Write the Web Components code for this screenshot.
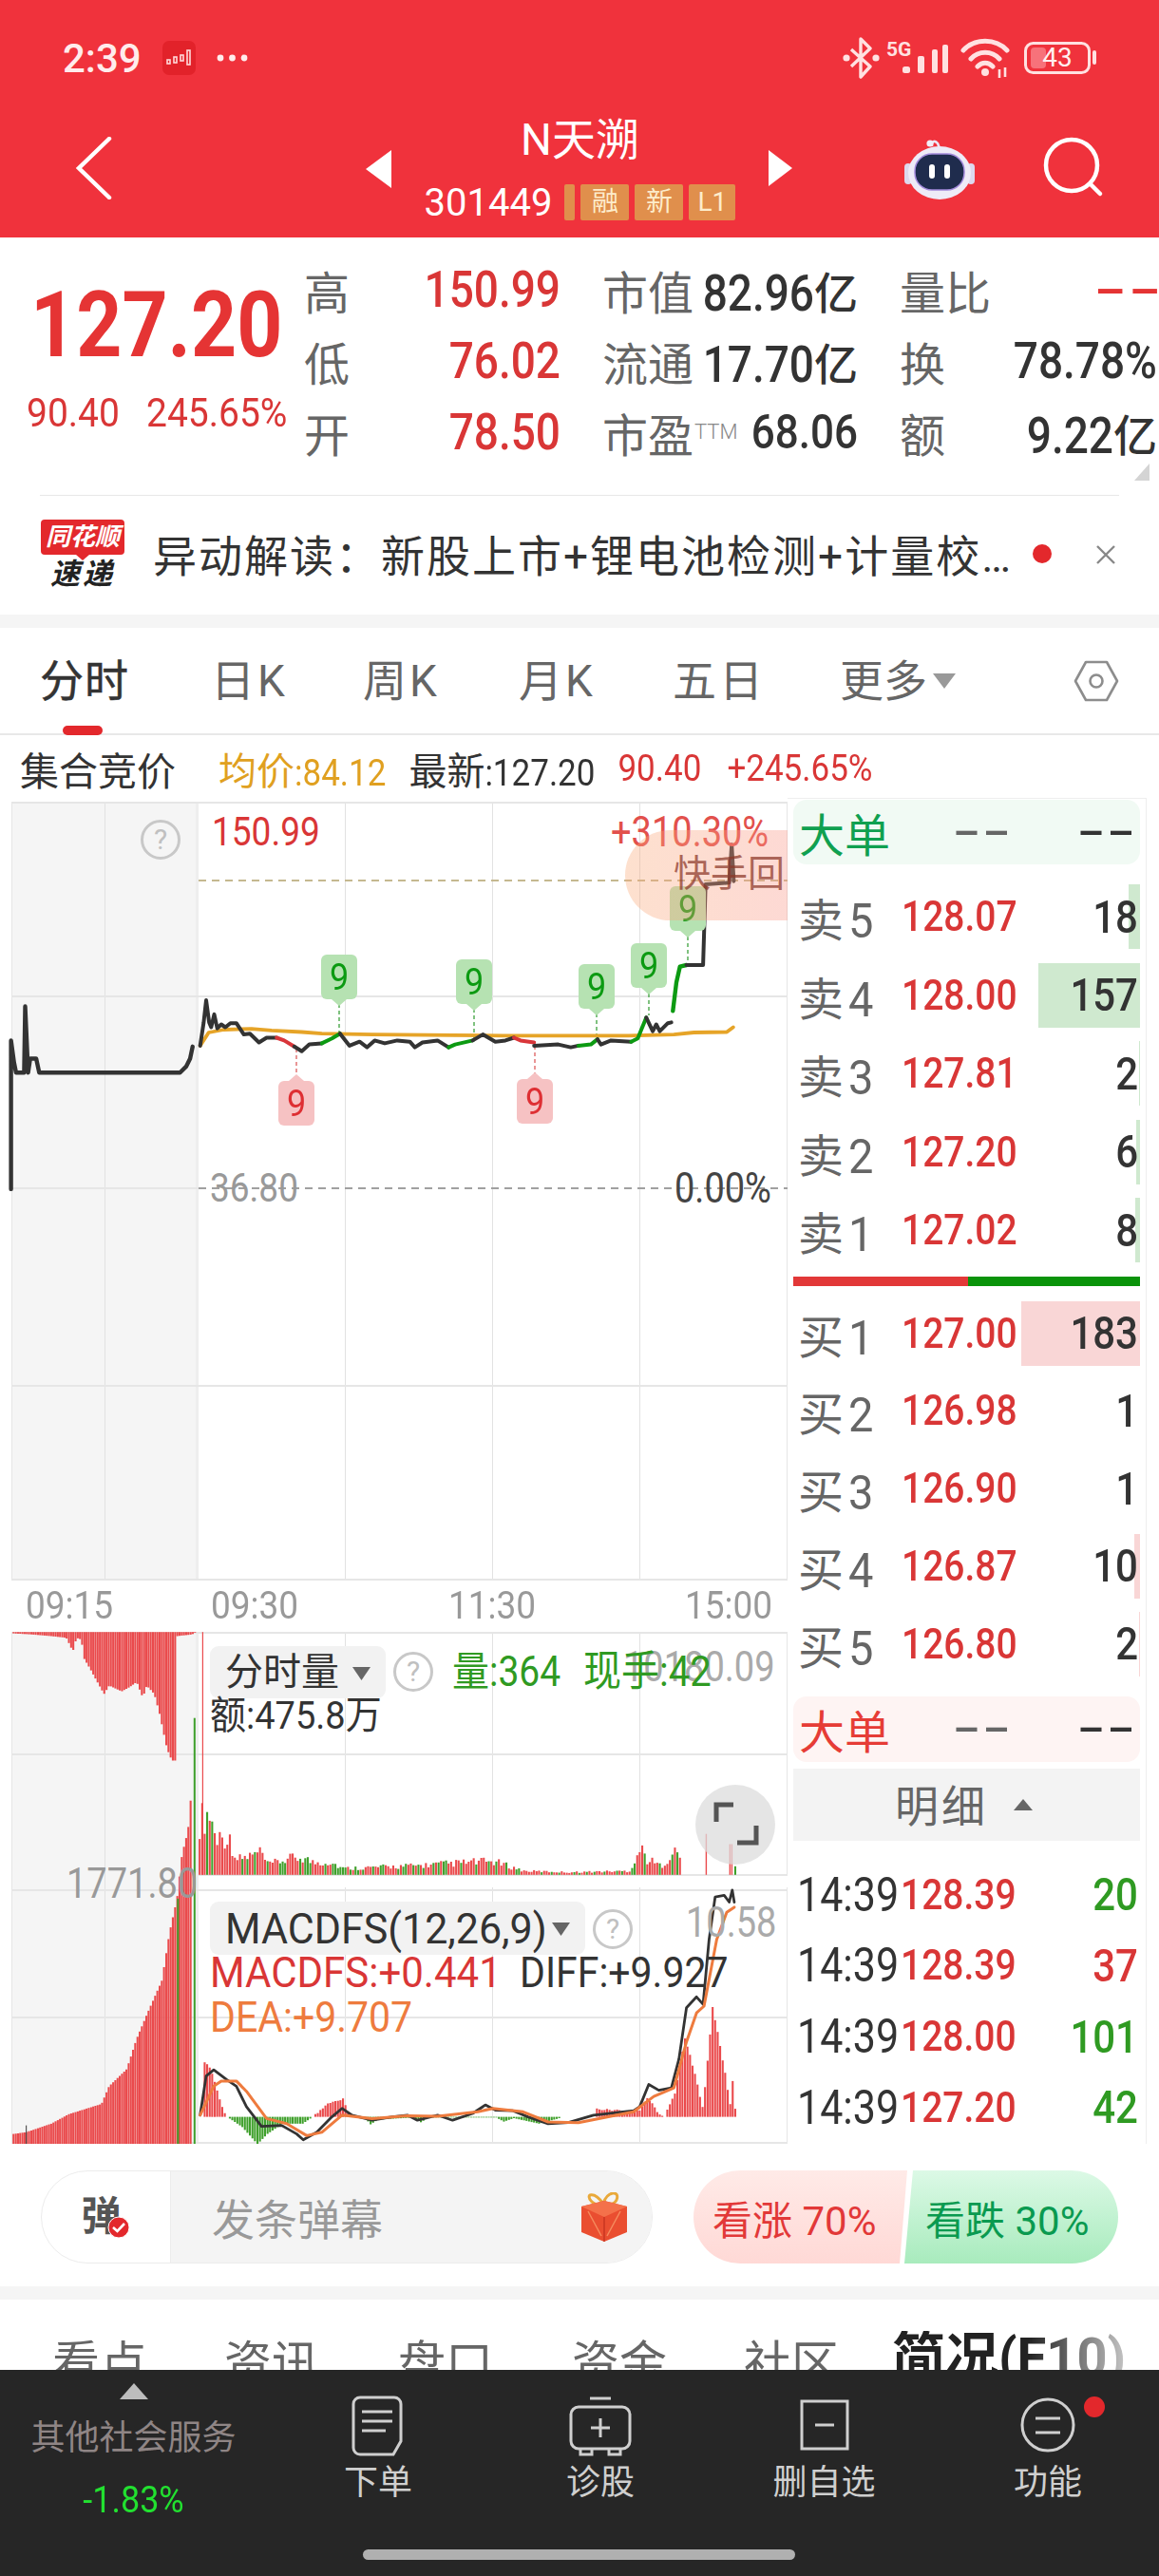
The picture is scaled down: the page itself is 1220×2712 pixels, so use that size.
<!DOCTYPE html>
<html lang="zh">
<head>
<meta charset="utf-8">
<title>N天溯</title>
<style>
html, body { margin: 0; padding: 0; background: #fff; }
body { width: 1220px; height: 2712px; overflow: hidden; font-family: Roboto, "Noto Sans CJK SC", sans-serif; color: #333; }
</style>
</head>
<body>
<app-header></app-header>
<quote-panel></quote-panel>
<news-bar></news-bar>
<gap-band></gap-band>
<chart-tabs></chart-tabs>
<info-line></info-line>
<main-row>
  <chart-column slot="left">
    <price-chart>
      <chart-label x="223" y="875" c="#d93636" size="37" sy="1.15">150.99</chart-label>
      <chart-label x="643" y="875" c="#e2504c" size="38" sy="1.15">+310.30%</chart-label>
      <chart-label x="169" y="883" c="#c0c0c0" size="30">?</chart-label>
      <chart-label x="221" y="1250" c="#999" size="37" sy="1.15">36.80</chart-label>
      <chart-label x="710" y="1250" c="#444" size="38" sy="1.15">0.00%</chart-label>
      <sig-mark x="357" y="1004" kind="up"></sig-mark>
      <sig-mark x="499" y="1009" kind="up"></sig-mark>
      <sig-mark x="628" y="1014" kind="up"></sig-mark>
      <sig-mark x="683" y="992" kind="up"></sig-mark>
      <sig-mark x="724" y="932" kind="up"></sig-mark>
      <sig-mark x="312" y="1137" kind="down"></sig-mark>
      <sig-mark x="563" y="1135" kind="down"></sig-mark>
      <hot-tag>快手回</hot-tag>
    </price-chart>
    <time-axis></time-axis>
    <volume-chart>
      <chart-label x="70" y="1982" c="#999" size="38" sy="1.15">1771.80</chart-label>
      <chart-label x="237" y="1760" c="#333" size="40">分时量</chart-label>
      <chart-label x="435" y="1759" c="#c0c0c0" size="30" center="1">?</chart-label>
      <chart-label x="656" y="1754" c="#aaa" size="38" sy="1.15">10180.09</chart-label>
      <chart-label x="476" y="1760" c="#2f9a22" size="39" sy="1.12">量:364</chart-label>
      <chart-label x="614" y="1760" c="#2f9a22" size="40" sy="1.1">现手:42</chart-label>
      <chart-label x="221" y="1805" c="#333" size="38" sy="1.08">额:475.8万</chart-label>
      <chart-label x="237" y="2030" c="#333" size="43" sy="1.05">MACDFS(12,26,9)</chart-label>
      <chart-label x="645" y="2030" c="#c0c0c0" size="30" center="1">?</chart-label>
      <chart-label x="722" y="2023" c="#aaa" size="38" sy="1.15">10.58</chart-label>
      <chart-label x="221" y="2076" c="#d93636" size="42" sy="1.05">MACDFS:+0.441</chart-label>
      <chart-label x="547" y="2076" c="#333" size="41" sy="1.08">DIFF:+9.927</chart-label>
      <chart-label x="221" y="2123" c="#ee7b3e" size="41" sy="1.08">DEA:+9.707</chart-label>
    </volume-chart>
  </chart-column>
  <order-book slot="right">
    <big-order kind="sell"></big-order>
    <book-row side="sell" idx="5" price="128.07" qty="18" bar="12"></book-row>
    <book-row side="sell" idx="4" price="128.00" qty="157" bar="107"></book-row>
    <book-row side="sell" idx="3" price="127.81" qty="2" bar="1"></book-row>
    <book-row side="sell" idx="2" price="127.20" qty="6" bar="4"></book-row>
    <book-row side="sell" idx="1" price="127.02" qty="8" bar="5"></book-row>
    <ratio-bar></ratio-bar>
    <book-row side="buy" idx="1" price="127.00" qty="183" bar="125"></book-row>
    <book-row side="buy" idx="2" price="126.98" qty="1" bar="0"></book-row>
    <book-row side="buy" idx="3" price="126.90" qty="1" bar="0"></book-row>
    <book-row side="buy" idx="4" price="126.87" qty="10" bar="6"></book-row>
    <book-row side="buy" idx="5" price="126.80" qty="2" bar="1"></book-row>
    <big-order kind="buy"></big-order>
    <detail-head></detail-head>
    <deal-row time="14:39" price="128.39" vol="20" c="#2f9a22"></deal-row>
    <deal-row time="14:39" price="128.39" vol="37" c="#d93636"></deal-row>
    <deal-row time="14:39" price="128.00" vol="101" c="#2f9a22"></deal-row>
    <deal-row time="14:39" price="127.20" vol="42" c="#2f9a22"></deal-row>
  </order-book>
</main-row>
<danmu-row></danmu-row>
<gap-band></gap-band>
<info-tabs></info-tabs>
<bottom-bar></bottom-bar>

<script>
const SHARED = `
  * { box-sizing: border-box; }
  :host { display: block; box-sizing: border-box; }
  .n { display: inline-block; transform: scaleY(1.15); }
  .dash { display: inline-block; font-weight: 700; transform: scaleX(2.1); transform-origin: right center; }
  svg { display: block; }
`;

class Base extends HTMLElement {
    constructor() {
        super();
        this.attachShadow({ mode: 'open' });
    }
    connectedCallback() {
        this.shadowRoot.innerHTML = `<style>${SHARED}${this.css()}</style>${this.html()}`;
        this.ready();
    }
    css() { return ''; }
    html() { return '<slot></slot>'; }
    ready() {}
}

// coordinates were read off the zoomed crops, these map them back to the page
const z3 = (u, v) => [u / 1.889, 560 + v / 3];
const z6 = (u, v) => [u / 1.889, 1700 + v / 2.786];
const z8 = (u, v) => [u / 1.889, 1050 + v / 2.364];

const line = (map, pts, color, w) => {
    const d = pts.map(p => map(p[0], p[1]).map(n => n.toFixed(1)).join(',')).join(' ');
    return `<polyline points="${d}" fill="none" stroke="${color}" stroke-width="${w}" stroke-linejoin="round" stroke-linecap="round"/>`;
};

const envelope = (pts, u) => {
    if (u <= pts[0][0]) return pts[0][1];
    for (let i = 1; i < pts.length; i++) {
        if (u <= pts[i][0]) {
            const [a, b] = [pts[i - 1], pts[i]];
            return a[1] + (b[1] - a[1]) * (u - a[0]) / (b[0] - a[0]);
        }
    }
    return pts[pts.length - 1][1];
};
const noise = i => Math.abs(Math.sin(i * 12.9898) * 43758.5453) % 1;

const gridLines = (ys, top, bottom) => `
    <rect x="12" y="${top}" width="194" height="${bottom - top}" fill="#f5f5f5"/>
    <rect x="206" y="${top}" width="3" height="${bottom - top}" fill="#eeeeee"/>
    ${[110, 363, 518, 673].map(x => `<rect x="${x}" y="${top}" width="1" height="${bottom - top}" fill="#e2e2e2"/>`).join('')}
    ${ys.map(y => `<rect x="12" y="${y}" width="817" height="2" fill="#e6e6e6"/>`).join('')}
    <rect x="12" y="${top}" width="1" height="${bottom - top}" fill="#e6e6e6"/>
    <rect x="828" y="${top}" width="1" height="${bottom - top}" fill="#e6e6e6"/>`;

class ChartLabel extends Base {
    css() { return `:host { position: absolute; line-height: 1; white-space: nowrap; }`; }
    ready() {
        const sy = this.getAttribute('sy') || 1;
        const cx = this.hasAttribute('center') || this.textContent === '?' ? '-50%' : '0';
        const top = this.parentElement.localName === 'volume-chart' ? 1717 : 839;
        this.style.left = this.getAttribute('x') + 'px';
        this.style.top = (this.getAttribute('y') - top) + 'px';
        this.style.color = this.getAttribute('c');
        this.style.fontSize = this.getAttribute('size') + 'px';
        this.style.transform = `translate(${cx}, -50%) scaleY(${sy})`;
    }
}

class SigMark extends Base {
    css() {
        return `
        :host { position: absolute; width: 38px; height: 47px; border-radius: 6px; display: flex; align-items: center; justify-content: center; font-size: 36px; line-height: 1; }
        :host([kind=up]) { background: #b6e2b2; color: #0c9a12; }
        :host([kind=down]) { background: #f6c2c3; color: #de2f33; }
        :host::after { content: ""; position: absolute; left: 11px; border: 8px solid transparent; }
        :host([kind=up])::after { top: 100%; border-top: 7px solid #b6e2b2; border-bottom: 0; }
        :host([kind=down])::after { bottom: 100%; border-bottom: 7px solid #f6c2c3; border-top: 0; }
        span { transform: scaleY(1.1); }`;
    }
    html() { return `<span>9</span>`; }
    ready() {
        this.style.left = (this.getAttribute('x') - 19) + 'px';
        this.style.top = (this.getAttribute('y') - 839) + 'px';
    }
}

class HotTag extends Base {
    css() {
        return `
        :host { position: absolute; left: 658px; top: 34px; width: 171px; height: 95px; padding: 22px 0 0 51px; border-radius: 48px 0 0 48px;
            background: linear-gradient(90deg, rgba(250,170,120,.36), rgba(250,150,135,.36)); color: rgba(140,55,40,.72); font-size: 39px; line-height: 48px; white-space: nowrap; overflow: hidden; }`;
    }
}

class AppHeader extends Base {
    css() {
        return `
        :host { height: 250px; background: #f0323c; color: #fff; display: grid; grid-template-rows: 122px 128px; }
        .status { display: flex; align-items: center; padding-left: 66px; color: #ffecec; position: relative; }
        .time { font-size: 42px; width: 105px; font-weight: 500; }
        .app { width: 35px; height: 36px; border-radius: 7px; background: #e2222a; display: flex; align-items: center; justify-content: center; }
        .more { margin-left: 22px; }
        .sys { position: absolute; left: 876px; top: 39px; width: 280px; height: 44px; color: #ffe1e1; }
        .five { position: absolute; left: 57px; top: 2px; font-size: 21px; font-weight: 700; line-height: 22px; }
        .batt { position: absolute; left: 210px; top: 6px; width: 54px; text-align: center; font-size: 28px; line-height: 32px; color: #fff0f0; }
        .nav { display: grid; grid-template-columns: 385px 449px 1fr; }
        .back { padding: 22px 0 0 78px; }
        .mid { display: flex; justify-content: space-between; align-items: flex-start; }
        .tri { margin-top: 36px; }
        .stack { display: flex; flex-direction: column; align-items: center; }
        .title { font-size: 46px; line-height: 50px; }
        .code { display: flex; align-items: center; margin-top: 22px; height: 38px; }
        .code b { font-weight: 400; font-size: 40px; margin-right: 13px; }
        .tag { height: 38px; background: #e08f4c; color: #fdeccb; font-size: 28px; line-height: 38px; text-align: center; border-radius: 2px; width: 51px; margin-left: 6px; }
        .tag.stripe { width: 11px; margin-left: 0; }
        .tag.l1 { width: 49px; }
        .tools { display: flex; align-items: flex-start; padding: 22px 0 0 118px; gap: 72px; }`;
    }
    html() {
        return `
        <div class="status">
            <span class="time">2:39</span>
            <span class="app"><svg width="28" height="18" viewBox="0 0 28 18" fill="none" stroke="#ffd9d9" stroke-width="1.6"><rect x="1" y="11" width="3" height="4"/><rect x="8" y="8" width="3" height="6"/><rect x="15" y="6" width="3" height="6"/><rect x="22" y="1" width="3" height="15"/></svg></span>
            <svg class="more" width="33" height="8" viewBox="0 0 33 8" fill="#ffecec"><circle cx="4" cy="4" r="3.4"/><circle cx="16.5" cy="4" r="3.4"/><circle cx="29" cy="4" r="3.4"/></svg>
            <div class="sys">
                <svg width="280" height="44" viewBox="0 0 280 44" fill="none" stroke="#ffe1e1">
                    <path d="M20 13 L40 31 L30 42 V2 L40 12 L20 31" stroke-width="3.4" stroke-linejoin="round"/>
                    <circle cx="15" cy="22" r="3.6" fill="#ffe1e1" stroke="none"/><circle cx="46" cy="22" r="3.6" fill="#ffe1e1" stroke="none"/>
                    <g fill="#ffe1e1" stroke="none">
                        <rect x="74" y="31" width="8" height="7" rx="2.5"/><rect x="90" y="20" width="7" height="18" rx="2"/><rect x="105" y="13" width="6" height="25" rx="2"/><rect x="116" y="8" width="6" height="30" rx="2"/>
                    </g>
                    <path d="M138 14 C150 1 172 1 184 14 M146 23 C154 14 168 14 176 23 M153 31 C158 26 164 26 169 31" stroke-width="5" stroke-linecap="round"/>
                    <circle cx="161" cy="37" r="4" fill="#ffe1e1" stroke="none"/>
                    <path d="M176 34 V43 M182 32 V42" stroke-width="2.6"/>
                    <rect x="203.500" y="6.500" width="67" height="31" rx="8" stroke-width="3"/>
                    <rect x="209" y="11" width="16" height="22" rx="4" fill="#f7727a" stroke="none"/>
                    <rect x="274" y="14" width="4" height="15" rx="2" fill="#ffe1e1" stroke="none"/>
                </svg>
                <span class="five">5G</span>
                <span class="batt">43</span>
            </div>
        </div>
        <div class="nav">
            <div class="back"><svg width="44" height="66" viewBox="0 0 44 66" fill="none" stroke="#fff" stroke-width="4.5" stroke-linecap="round"><path d="M37 2 L5 33 L37 64"/></svg></div>
            <div class="mid">
                <svg class="tri" width="27" height="40" viewBox="0 0 27 40" fill="#fff"><path d="M27 0 V40 L0 20Z"/></svg>
                <div class="stack">
                    <div class="title">N天溯</div>
                    <div class="code"><b>301449</b><span class="tag stripe"></span><span class="tag">融</span><span class="tag">新</span><span class="tag l1">L1</span></div>
                </div>
                <svg class="tri" width="25" height="38" viewBox="0 0 25 38" fill="#fff"><path d="M0 0 V38 L25 19Z"/></svg>
            </div>
            <div class="tools">
                <svg width="74" height="66" viewBox="0 0 74 66">
                    <path d="M29 10 C28 5 32 3 35 7 L37 12" fill="none" stroke="#ece6f5" stroke-width="2.6"/>
                    <circle cx="27" cy="7" r="3.6" fill="#f2eef8"/>
                    <rect x="0" y="28" width="8" height="22" rx="4" fill="#ddd8ee"/><rect x="66" y="28" width="8" height="22" rx="4" fill="#ddd8ee"/>
                    <ellipse cx="37" cy="38" rx="33" ry="28" fill="#eeebf7"/>
                    <rect x="11" y="18" width="52" height="38" rx="18" fill="#1f2c4d" stroke="#a48bdc" stroke-width="1.5"/>
                    <rect x="26" y="29" width="6" height="15" rx="3" fill="#fff"/><rect x="42" y="29" width="6" height="15" rx="3" fill="#fff"/>
                </svg>
                <svg width="64" height="64" viewBox="0 0 64 64" fill="none" stroke="#fff" stroke-width="4.5" stroke-linecap="round"><circle cx="30" cy="30" r="27"/><path d="M50 50 L60 60"/></svg>
            </div>
        </div>`;
    }
}

class QuotePanel extends Base {
    css() {
        return `
        :host { height: 272px; display: flex; position: relative; }
        .main { width: 320px; padding: 45px 0 0 28px; display: flex; flex-direction: column; color: #d93636; }
        .big { font-size: 84px; font-weight: 700; line-height: 96px; margin-left: 4px; color: #e53434; }
        .big .n { transform: scaleY(1.15); }
        .sub { display: flex; gap: 28px; font-size: 39px; line-height: 46px; margin-top: 21px; }
        .sub .n { transform: scaleY(1.1); }
        .grid { position: absolute; left: 320px; top: 17px; width: 898px; display: grid; grid-template-columns: 270px 269px 271px; column-gap: 44px; grid-auto-rows: 75px; }
        .cell { display: flex; justify-content: space-between; align-items: center; font-size: 48px; color: #666; white-space: nowrap; }
        .cell b { font-weight: 500; font-size: 46px; color: #333; }
        .cell b.red { color: #d93636; }
        .cell b.small { font-size: 44px; }
        sup { font-size: 22px; font-weight: 300; color: #888; vertical-align: 14px; line-height: 0; margin-left: 1px; }
        .corner { position: absolute; right: 10px; top: 238px; }
        .rule { position: absolute; left: 42px; right: 42px; bottom: 0; height: 1px; background: #e8e8e8; }
        .dashes { color: #e53434; font-size: 44px; margin-right: -6px; }`;
    }
    html() {
        const cell = (label, value, cls = '') => `<div class="cell"><span>${label}</span><b class="${cls}">${value}</b></div>`;
        return `
        <div class="main">
            <div class="big"><span class="n">127.20</span></div>
            <div class="sub"><span class="n">90.40</span><span class="n">245.65%</span></div>
        </div>
        <div class="grid">
            ${cell('高', '<span class="n">150.99</span>', 'red')}
            ${cell('市值', '<span class="n">82.96</span>亿')}
            <div class="cell"><span>量比</span><span class="dash dashes">--</span></div>
            ${cell('低', '<span class="n">76.02</span>', 'red')}
            ${cell('流通', '<span class="n">17.70</span>亿')}
            ${cell('换', '<span class="n">78.78%</span>')}
            ${cell('开', '<span class="n">78.50</span>', 'red')}
            ${cell('市盈<sup>TTM</sup>', '<span class="n">68.06</span>', 'small')}
            ${cell('额', '<span class="n">9.22</span>亿')}
        </div>
        <svg class="corner" width="16" height="18" viewBox="0 0 16 18" fill="#d4d4d4"><path d="M16 0 V18 H0Z"/></svg>
        <div class="rule"></div>`;
    }
}

class NewsBar extends Base {
    css() {
        return `
        :host { height: 125px; display: flex; align-items: center; padding-left: 43px; position: relative; }
        .logo { width: 88px; margin-top: -1px; display: flex; flex-direction: column; align-items: center; position: relative; }
        .top { width: 88px; height: 37px; border-radius: 4px; background: #e3282c; color: #fff; font-weight: 700; font-style: italic; font-size: 26px; line-height: 37px; text-align: center; white-space: nowrap; }
        .tip { width: 0; height: 0; border: 7px solid transparent; border-top: 6px solid #e3282c; border-bottom: 0; }
        .bot { font-weight: 700; font-style: italic; font-size: 31px; line-height: 32px; color: #222; letter-spacing: 3px; margin-top: -1px; }
        .text { margin: -6px 0 0 30px; font-size: 46px; letter-spacing: 2px; color: #333; white-space: nowrap; }
        .dot { position: absolute; left: 1087px; top: 51px; width: 20px; height: 20px; border-radius: 50%; background: #e3282c; }
        .close { position: absolute; left: 1152px; top: 50px; }`;
    }
    html() {
        return `
        <div class="logo"><div class="top">同花顺</div><div class="tip"></div><div class="bot">速递</div></div>
        <div class="text">异动解读：新股上市+锂电池检测+计量校…</div>
        <div class="dot"></div>
        <svg class="close" width="24" height="24" viewBox="0 0 24 24" stroke="#888" stroke-width="2.4"><path d="M3 3 L21 21 M21 3 L3 21"/></svg>`;
    }
}

class GapBand extends Base {
    css() { return `:host { height: 14px; background: #f5f5f5; }`; }
    html() { return ''; }
}

class ChartTabs extends Base {
    css() {
        return `
        :host { height: 113px; border-bottom: 2px solid #e8e8e8; display: grid; grid-template-columns: 180px 160px 164px 162px 176px 246px 1fr; align-items: start; padding: 32px 0 0 42px; position: relative; font-size: 46px; color: #666; line-height: 48px; }
        span { letter-spacing: 3px; white-space: nowrap; }
        .on { color: #333; letter-spacing: 1px; position: relative; -webkit-text-stroke: .5px #333; }
        .on::after { content: ""; position: absolute; left: 24px; top: 71px; width: 42px; height: 10px; border-radius: 5px; background: #e3282c; }
        .more { display: flex; align-items: center; gap: 6px; letter-spacing: 0; }
        .hex { margin-top: 1px; }`;
    }
    html() {
        return `
        <span class="on">分时</span><span>日K</span><span>周K</span><span>月K</span><span>五日</span>
        <span class="more">更多<svg width="24" height="16" viewBox="0 0 24 16" fill="#999"><path d="M0 0 H24 L12 16Z"/></svg></span>
        <svg class="hex" width="48" height="46" viewBox="0 0 48 46" fill="none" stroke="#8d8d8d" stroke-width="2.6"><path d="M13 3 H35 L46 23 L35 43 H13 L2 23Z" stroke-linejoin="round"/><circle cx="24" cy="23" r="6.5"/></svg>`;
    }
}

class InfoLine extends Base {
    css() {
        return `
        :host { height: 66px; display: flex; align-items: center; padding: 4px 0 0 21px; white-space: nowrap; font-size: 35px; }
        .lead { font-size: 41px; margin-right: 45px; color: #333; }
        span { display: inline-block; }
        .cn { font-size: 40px; }
        .n { transform: scaleY(1.12); }`;
    }
    html() {
        return `
        <span class="lead">集合竞价</span>
        <span style="color:#e0a020;margin-right:24px"><span class="cn">均价</span><span class="n">:84.12</span></span>
        <span style="color:#333;margin-right:24px"><span class="cn">最新</span><span class="n">:127.20</span></span>
        <span class="n" style="color:#d93636;margin-right:27px">90.40</span>
        <span class="n" style="color:#d93636">+245.65%</span>`;
    }
}

class MainRow extends Base {
    css() { return `:host { display: flex; height: 1417px; }`; }
    html() { return `<slot name="left"></slot><slot name="right"></slot>`; }
}

class ChartColumn extends Base {
    css() { return `:host { width: 829px; flex: none; }`; }
}

class PriceChart extends Base {
    css() { return `:host { position: relative; width: 829px; height: 824px; overflow: hidden; }`; }
    html() {
        const black = '#333';
        const pre = [[22, 475], [22, 105], [28, 160], [32, 185], [48, 185], [50, 20], [56, 185], [60, 150], [72, 150], [78, 185], [358, 185], [370, 170], [378, 150], [383, 120]];
        const avg = [[398, 118], [415, 85], [445, 78], [500, 76], [540, 80], [600, 84], [640, 88], [740, 90], [900, 92], [1000, 93], [1250, 93], [1340, 90], [1380, 85], [1445, 84], [1458, 72]];
        const segs = [
            [black, [[398, 118], [405, 60], [410, 5], [416, 60], [420, 72], [426, 40], [432, 75], [440, 65], [448, 72], [458, 62], [470, 62], [485, 90], [497, 88], [515, 110], [530, 98], [550, 98]]],
            ['#d9363a', [[550, 98], [565, 105], [585, 120]]],
            [black, [[585, 120], [600, 132], [615, 115], [640, 112]]],
            ['#0c9a12', [[640, 112], [660, 100], [676, 88]]],
            [black, [[676, 88], [695, 118], [715, 108], [730, 122], [745, 105], [765, 112], [790, 105], [815, 108], [825, 122], [840, 110], [870, 105], [892, 122]]],
            ['#0c9a12', [[892, 122], [905, 115], [940, 105]]],
            [black, [[940, 105], [960, 90], [985, 108], [1005, 105], [1022, 98]]],
            ['#d9363a', [[1022, 98], [1035, 105], [1062, 110]]],
            [black, [[1062, 118], [1110, 115], [1135, 122], [1150, 118]]],
            ['#0c9a12', [[1150, 118], [1175, 115], [1188, 102]]],
            [black, [[1188, 102], [1195, 115], [1215, 105], [1255, 108]]],
            ['#0c9a12', [[1255, 108], [1268, 100], [1285, 48]]],
            [black, [[1285, 48], [1298, 82], [1305, 65], [1312, 82], [1328, 62], [1335, 60]]]
        ];
        const stems = [[357, 1056, 1087, '#4aa84a'], [499, 1061, 1095, '#4aa84a'], [628, 1066, 1095, '#4aa84a'], [683, 1045, 1068, '#4aa84a'], [724, 985, 1015, '#4aa84a'], [312, 1103, 1131, '#e06a6a'], [563, 1100, 1129, '#e06a6a']];
        return `
        <svg width="829" height="824" viewBox="0 839 829 824">
            ${gridLines([843, 1047, 1249, 1457, 1661], 843, 1663)}
            <rect x="209" y="1249" width="620" height="2" fill="#fff"/>
            <path d="M209 1250 H829" stroke="#a0a0a0" stroke-width="2" stroke-dasharray="8 6"/>
            <path d="M209 926 H829" stroke="#c5b890" stroke-width="2" stroke-dasharray="8 6"/>
            ${stems.map(s => `<path d="M${s[0]} ${s[1]} V${s[2]}" stroke="${s[3]}" stroke-width="1.4" stroke-dasharray="4 3"/>`).join('')}
            <circle cx="169" cy="883" r="19.5" fill="none" stroke="#c8c8c8" stroke-width="3"/>
            ${line(z8, pre, black, 4.4)}
            <path d="M12 1250 V1094" stroke="${black}" stroke-width="2"/>
            ${line(z8, avg, '#e6a428', 3.8)}
            ${segs.map(s => line(z8, s[1], s[0], 4)).join('')}
            ${line(z3, [[1338, 1510], [1345, 1420], [1352, 1370], [1365, 1365]], '#0c9a12', 4.4)}
            ${line(z3, [[1365, 1365], [1398, 1365], [1403, 1110], [1450, 1105], [1455, 985], [1459, 1100]], black, 4)}
        </svg>
        <slot></slot>`;
    }
}

class TimeAxis extends Base {
    css() {
        return `
        :host { height: 54px; display: grid; grid-template-columns: 195px 250px 249px 1fr; padding: 7px 0 0 27px; color: #999; font-size: 37px; line-height: 40px; }
        .n { transform: scaleY(1.12); }`;
    }
    html() {
        return ['09:15', '09:30', '11:30', '15:00'].map(t => `<div><span class="n">${t}</span></div>`).join('');
    }
}

class VolumeChart extends Base {
    css() { return `:host { position: relative; width: 829px; height: 539px; overflow: hidden; }`; }
    html() {
        const red = '#ea4a4c', green = '#3fa02c';
        let bars = '';
        const bar = (u, v, base, color, w = 2.1) => {
            const [x, y] = z6(u, v);
            const b = z6(u, base)[1];
            bars += `<rect x="${x.toFixed(1)}" y="${Math.min(y, b).toFixed(1)}" width="${w}" height="${Math.abs(b - y).toFixed(1)}" fill="${color}"/>`;
        };

        const topLeft = [[25, 52], [60, 55], [100, 60], [130, 65], [143, 105], [150, 65], [160, 70], [165, 125], [175, 150], [190, 190], [205, 230], [215, 205], [240, 222], [255, 210], [270, 195], [282, 240], [290, 205], [305, 230], [315, 285], [330, 390], [340, 425], [348, 425], [350, 60], [380, 55], [386, 50]];
        for (let u = 25; u < 386; u += 4.4) bar(u, envelope(topLeft, u), 48, red);

        const botLeft = [[25, 1520], [50, 1515], [100, 1490], [135, 1462], [200, 1432], [215, 1380], [250, 1330], [270, 1240], [290, 1170], [320, 1070], [335, 930], [350, 830], [360, 700], [372, 630], [380, 490]];
        for (let u = 25; u < 381; u += 4.4) bar(u, envelope(botLeft, u), 1550, red);
        bar(51, 1495, 1550, '#555', 1.2);
        bar(352, 830, 1550, green, 2);
        bar(385, 300, 1550, green, 2);
        bar(402, 48, 760, red, 1.2);

        const vol = [[395, 550], [412, 520], [420, 545], [425, 610], [450, 610], [460, 650], [470, 700], [490, 690], [517, 672], [530, 720], [580, 695], [600, 692], [620, 712], [655, 710], [680, 735], [820, 725], [940, 710], [980, 708], [1040, 745], [1130, 750], [1250, 745], [1272, 655], [1285, 700], [1312, 725], [1345, 665], [1355, 745]];
        let i = 0;
        for (let u = 395; u < 1355; u += 5, i++) {
            const top = envelope(vol, u);
            const h = (760 - top) * (0.5 + 0.5 * noise(i));
            bar(u, 760 - h, 760, noise(i + 40) > 0.72 ? green : red);
        }
        bar(1403, 640, 760, red, 1.4);
        bar(1450, 670, 760, red, 1.4);
        bar(1454, 670, 760, red, 1.4);
        bar(1460, 735, 760, green);

        const macdUp = [[410, 1310], [420, 1340], [440, 1440], [450, 1470], [620, 1470], [625, 1460], [650, 1430], [680, 1415], [690, 1450], [700, 1465], [760, 1470], [1180, 1470], [1185, 1445], [1270, 1450], [1285, 1410], [1310, 1460], [1320, 1465], [1340, 1400], [1360, 1235], [1380, 1340], [1395, 1440], [1400, 1380], [1415, 1145], [1425, 1220], [1440, 1340], [1450, 1430], [1456, 1350], [1460, 1445]];
        const macdDown = [[455, 1475], [480, 1500], [510, 1550], [530, 1520], [560, 1490], [600, 1490], [620, 1470]];
        const macdDownSmall = [[725, 1475], [735, 1492], [750, 1478], [820, 1472], [835, 1486], [850, 1472], [985, 1472], [1000, 1484], [1020, 1474], [1070, 1490], [1110, 1474]];
        i = 0;
        for (let u = 405; u <= 1460; u += 5, i++) {
            if (u < 450 || (u > 620 && u < 710) || u > 1180) bar(u, envelope(macdUp, u) + 6 * noise(i), 1470, red);
            else if (u >= 455 && u <= 620) bar(u, envelope(macdDown, u), 1470, green);
            else if (u >= 725 && u <= 1110) bar(u, envelope(macdDownSmall, u), 1470, green);
        }

        const dif = [[398, 1465], [410, 1350], [425, 1332], [450, 1360], [470, 1380], [490, 1440], [520, 1498], [560, 1495], [590, 1520], [603, 1537], [630, 1515], [660, 1470], [680, 1445], [700, 1465], [740, 1480], [780, 1470], [810, 1465], [830, 1480], [870, 1465], [900, 1480], [940, 1460], [965, 1435], [985, 1450], [1020, 1452], [1050, 1470], [1090, 1490], [1130, 1487], [1180, 1465], [1260, 1452], [1272, 1440], [1290, 1375], [1310, 1392], [1335, 1385], [1350, 1300], [1365, 1150], [1385, 1118], [1398, 1140], [1410, 950], [1422, 825], [1440, 820], [1450, 840], [1456, 805], [1460, 840]];
        const dea = [[398, 1465], [425, 1380], [440, 1365], [470, 1365], [490, 1395], [530, 1475], [570, 1490], [610, 1525], [640, 1515], [680, 1465], [740, 1475], [810, 1467], [870, 1468], [950, 1455], [980, 1445], [1040, 1455], [1090, 1485], [1150, 1487], [1260, 1455], [1300, 1410], [1340, 1385], [1365, 1250], [1385, 1165], [1400, 1145], [1425, 950], [1445, 870], [1460, 855]];

        return `
        <svg width="829" height="539" viewBox="0 1717 829 539">
            ${gridLines([1717, 1845, 1988, 2122, 2254], 1717, 2256)}
            <rect x="209" y="1973" width="620" height="13" fill="#fff"/>
            <rect x="209" y="1972" width="620" height="2" fill="#e6e6e6"/>
            ${bars}
            ${line(z6, dif, '#333', 2.8)}
            ${line(z6, dea, '#ee7b3e', 3)}
            <rect x="221" y="1732" width="185" height="55" rx="9" fill="#f2f2f2"/>
            <path d="M371 1754 H390 L380.5 1768Z" fill="#666"/>
            <rect x="221" y="2001" width="395" height="56" rx="9" fill="#f2f2f2"/>
            <path d="M581 2023 H600 L590.500 2037Z" fill="#666"/>
            <circle cx="435" cy="1759" r="19.5" fill="none" stroke="#c8c8c8" stroke-width="3"/>
            <circle cx="645" cy="2030" r="19.5" fill="none" stroke="#c8c8c8" stroke-width="3"/>
            <circle cx="774" cy="1920" r="42" fill="#dcdcdc" fill-opacity=".75"/>
            <path d="M754 1917 V1899 H772 M796 1921 V1939 H776" fill="none" stroke="#555" stroke-width="5"/>
        </svg>
        <slot></slot>`;
    }
}

class OrderBook extends Base {
    css() {
        return `
        :host { width: 378px; flex: none; height: 1417px; border: 1px solid #eee; border-width: 1px 1px 0 0; padding: 1px 6px 0 6px; overflow: hidden; }`;
    }
}

class BigOrder extends Base {
    css() {
        return `
        :host { height: 68px; border-radius: 14px; display: flex; align-items: center; padding: 0 5px 0 6px; font-size: 48px; white-space: nowrap; }
        :host([kind=sell]) { background: #f1faf4; color: #10a050; margin-bottom: 21px; }
        :host([kind=buy]) { background: #fef4f3; color: #e63c36; margin-top: 21px; height: 69px; }
        .a, .b { font-size: 38px; width: 54px; text-align: right; flex: none; }
        .a { color: #666; margin-left: 74px; }
        .b { color: #333; margin-left: 77px; }`;
    }
    html() { return `<span>大单</span><span class="a"><span class="dash">--</span></span><span class="b"><span class="dash">--</span></span>`; }
}

class BookRow extends Base {
    css() {
        return `
        :host { height: 68px; position: relative; display: flex; align-items: center; margin-bottom: 14.500px; white-space: nowrap; }
        :host([side=buy]) { margin-bottom: 13.750px; }
        .bar { position: absolute; right: 0; top: 0; bottom: 0; }
        :host([side=sell]) .bar { background: #cfe9cf; }
        :host([side=buy]) .bar { background: #f9d6d6; }
        .lab { width: 114px; padding-left: 5px; font-size: 48px; color: #666; flex: none; position: relative; }
        .lab .n { transform: scaleY(1.08); margin-left: 5px; font-size: 47px; }
        .price { color: #d93636; font-size: 39px; position: relative; font-weight: 500; }
        .qty { margin-left: auto; padding-right: 2px; font-size: 42px; color: #333; position: relative; font-weight: 500; }`;
    }
    html() {
        const a = k => this.getAttribute(k);
        const word = a('side') === 'sell' ? '卖' : '买';
        return `
        <div class="bar" style="width:${a('bar')}px"></div>
        <span class="lab">${word}<span class="n">${a('idx')}</span></span>
        <span class="price"><span class="n">${a('price')}</span></span>
        <span class="qty"><span class="n">${a('qty')}</span></span>`;
    }
}

class RatioBar extends Base {
    css() {
        return `
        :host { height: 10px; margin: 1.500px 0 16px; display: flex; }
        i { display: block; }
        .r { width: 184px; background: #e23838; }
        .g { flex: 1; background: #0a930a; }`;
    }
    html() { return `<i class="r"></i><i class="g"></i>`; }
}

class DetailHead extends Base {
    css() {
        return `
        :host { height: 76px; margin: 7px 0 20px; background: #f3f3f3; position: relative; display: flex; align-items: center; padding: 0 0 4px 107px; font-size: 46px; color: #666; letter-spacing: 3px; }
        svg { position: absolute; left: 232px; top: 32px; }`;
    }
    html() { return `明细<svg width="20" height="12" viewBox="0 0 20 12" fill="#666"><path d="M0 12 H20 L10 0Z"/></svg>`; }
}

class DealRow extends Base {
    css() {
        return `
        :host { height: 75px; display: flex; align-items: center; white-space: nowrap; padding-left: 4px; margin-top: -0.300px; font-weight: 500; }
        .t { font-size: 43px; color: #333; width: 109px; font-weight: 400; }
        .p { font-size: 39px; color: #d93636; }
        .v { margin-left: auto; padding-right: 2px; font-size: 42px; }`;
    }
    html() {
        const a = k => this.getAttribute(k);
        return `<span class="t"><span class="n">${a('time')}</span></span><span class="p"><span class="n">${a('price')}</span></span><span class="v" style="color:${a('c')}"><span class="n">${a('vol')}</span></span>`;
    }
}

class DanmuRow extends Base {
    css() {
        return `
        :host { height: 150px; padding: 28px 0 0 43px; display: flex; }
        .pill { width: 644px; height: 98px; border: 1.5px solid #ececec; border-radius: 49px; display: flex; overflow: hidden; }
        .lead { width: 135px; display: flex; align-items: center; justify-content: center; font-size: 42px; font-weight: 700; color: #555; position: relative; padding: 0 10px 10px 0; }
        .lead svg { position: absolute; left: 69px; top: 47px; }
        .field { flex: 1; background: #f4f4f4; border-left: 1.5px solid #ececec; display: flex; align-items: center; justify-content: space-between; padding: 0 25px 0 43px; font-size: 45px; color: #999; }
        .senti { margin-left: 43px; width: 447px; height: 98px; border-radius: 49px; overflow: hidden; display: flex; font-size: 42px; white-space: nowrap; }
        .up, .down { width: 225px; flex: none; display: flex; align-items: center; }
        .up { background: linear-gradient(#ffeae7, #ffd9d6); color: #e23838; padding-left: 20px; clip-path: polygon(0 0, 100% 0, 217px 100%, 0 100%); }
        .down { margin-left: -3px; background: linear-gradient(#dcf9e6, #a8ebbd); color: #0a9a50; padding-left: 22px; clip-path: polygon(9px 0, 100% 0, 100% 100%, 0 100%); }`;
    }
    html() {
        return `
        <div class="pill">
            <div class="lead">弹<svg width="24" height="24" viewBox="0 0 24 24"><circle cx="12" cy="12" r="11" fill="#e3282c" stroke="#fff" stroke-width="1"/><path d="M6 12 L10.500 16 L18 8" fill="none" stroke="#fff" stroke-width="2.6"/></svg></div>
            <div class="field"><span>发条弹幕</span>
                <svg width="50" height="52" viewBox="0 0 50 52">
                    <path d="M24 12 C14 -2 4 2 12 10 C15 13 20 13 24 12 C28 -2 42 -2 38 8 C36 13 30 13 25 12" fill="none" stroke="#e9a93a" stroke-width="3"/>
                    <path d="M1 15 L25 9 L49 15 V42 L25 52 L1 42Z" fill="#ea4e30"/>
                    <path d="M1 15 L25 26 L49 15 L25 9Z" fill="#f4714a"/>
                    <path d="M25 26 V52" stroke="#c93620" stroke-width="1.500"/>
                    <path d="M8 20 L22 46 M42 20 L28 46" stroke="#f58a5d" stroke-width="1.500"/>
                </svg>
            </div>
        </div>
        <div class="senti"><div class="up">看涨 70%</div><div class="down">看跌 30%</div></div>`;
    }
}

class InfoTabs extends Base {
    css() {
        return `
        :host { height: 74px; overflow: hidden; display: grid; grid-template-columns: 181px 183px 183px 181px 156px 1fr; align-items: start; padding: 40px 0 0 55px; font-size: 50px; line-height: 56px; color: #666; white-space: nowrap; }
        .on { font-size: 56px; font-weight: 700; color: #222; margin-top: -7px; -webkit-mask-image: linear-gradient(90deg, #000 55%, rgba(0,0,0,.15)); mask-image: linear-gradient(90deg, #000 55%, rgba(0,0,0,.15)); width: 262px; }`;
    }
    html() {
        return `<span>看点</span><span>资讯</span><span>盘口</span><span>资金</span><span>社区</span><span class="on">简况(F10)</span>`;
    }
}

class BottomBar extends Base {
    css() {
        return `
        :host { height: 218px; background: #262626; position: relative; display: grid; grid-template-columns: 281px 234px 234px 237px 1fr; }
        .sector { display: flex; flex-direction: column; align-items: center; padding-top: 14px; }
        .name { font-size: 36px; color: #8f8585; line-height: 40px; margin-top: 21px; white-space: nowrap; }
        .pct { font-size: 36px; color: #22e030; margin-top: 25px; line-height: 40px; }
        .pct .n { transform: scaleY(1.1); }
        .item { display: flex; flex-direction: column; align-items: center; padding-top: 27px; font-size: 36px; color: #cfcfcf; position: relative; }
        .item svg { height: 64px; margin-bottom: 8px; }
        .item span { line-height: 40px; }
        .dot { position: absolute; left: 155px; top: 28px; width: 22px; height: 22px; border-radius: 50%; background: #e3282c; }
        .home { position: absolute; left: 382px; top: 189px; width: 455px; height: 11px; border-radius: 6px; background: #b0b0b0; }`;
    }
    html() {
        return `
        <div class="sector">
            <svg width="30" height="17" viewBox="0 0 30 17" fill="#bdbdbd"><path d="M15 0 L30 17 H0Z"/></svg>
            <div class="name">其他社会服务</div>
            <div class="pct"><span class="n">-1.83%</span></div>
        </div>
        <div class="item">
            <svg width="56" height="64" viewBox="0 0 56 64" fill="none" stroke="#cfcfcf" stroke-width="3"><path d="M9 2 H45 a7 7 0 0 1 7 7 V48 L44 62 H9 a7 7 0 0 1 -7 -7 V9 a7 7 0 0 1 7 -7Z"/><path d="M11 17 H43 M11 27 H43 M11 37 H36"/></svg>
            <span>下单</span>
        </div>
        <div class="item">
            <svg width="66" height="64" viewBox="0 0 66 64" fill="none" stroke="#cfcfcf" stroke-width="3"><path d="M22 3 H44"/><rect x="2" y="12" width="62" height="44" rx="8"/><path d="M33 24 V44 M23 34 H43 M12 56 V62 H24 V56 M42 56 V62 H54 V56"/></svg>
            <span>诊股</span>
        </div>
        <div class="item">
            <svg width="52" height="64" viewBox="0 0 52 64" fill="none" stroke="#cfcfcf" stroke-width="3"><rect x="2" y="6" width="48" height="50"/><path d="M16 31 H36"/></svg>
            <span>删自选</span>
        </div>
        <div class="item">
            <svg width="60" height="64" viewBox="0 0 60 64" fill="none" stroke="#cfcfcf" stroke-width="3"><circle cx="30" cy="31" r="27"/><path d="M17 24 H43 M17 39 H43"/></svg>
            <span>功能</span>
            <div class="dot"></div>
        </div>
        <div class="home"></div>`;
    }
}

customElements.define('chart-label', ChartLabel);
customElements.define('sig-mark', SigMark);
customElements.define('hot-tag', HotTag);
customElements.define('app-header', AppHeader);
customElements.define('quote-panel', QuotePanel);
customElements.define('news-bar', NewsBar);
customElements.define('gap-band', GapBand);
customElements.define('chart-tabs', ChartTabs);
customElements.define('info-line', InfoLine);
customElements.define('main-row', MainRow);
customElements.define('chart-column', ChartColumn);
customElements.define('price-chart', PriceChart);
customElements.define('time-axis', TimeAxis);
customElements.define('volume-chart', VolumeChart);
customElements.define('order-book', OrderBook);
customElements.define('big-order', BigOrder);
customElements.define('book-row', BookRow);
customElements.define('ratio-bar', RatioBar);
customElements.define('detail-head', DetailHead);
customElements.define('deal-row', DealRow);
customElements.define('danmu-row', DanmuRow);
customElements.define('info-tabs', InfoTabs);
customElements.define('bottom-bar', BottomBar);
</script>
</body>
</html>
